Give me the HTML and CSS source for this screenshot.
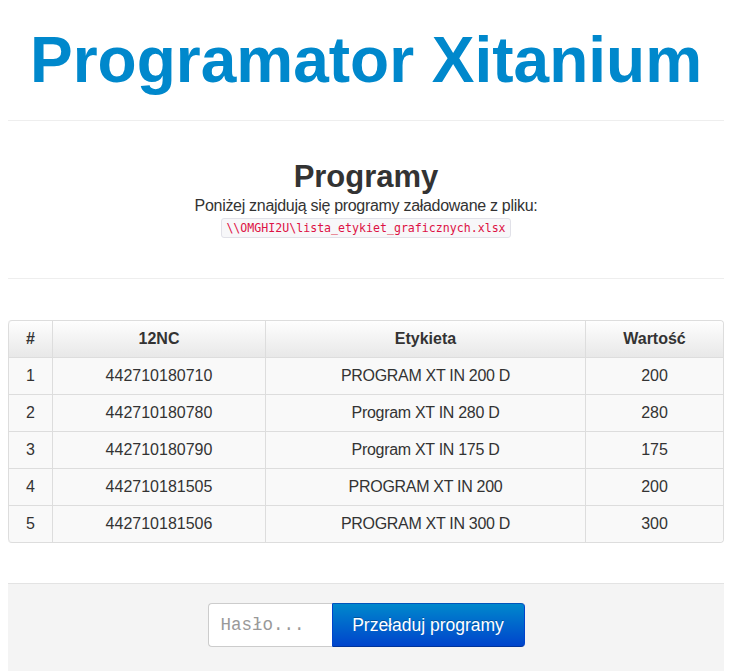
FILE: index.html
```html
<!DOCTYPE html>
<html lang="pl">
<head>
<meta charset="utf-8">
<title>Programator Xitanium</title>
<link rel="stylesheet" href="styles.css">
</head>
<body>
<div class="container">
  <h1 class="title">Programator Xitanium</h1>
  <hr class="divider">
  <div class="intro">
    <h2 class="heading">Programy</h2>
    <p class="lead">Poniżej znajdują się programy załadowane z pliku:</p>
    <code class="path">\\OMGHI2U\lista_etykiet_graficznych.xlsx</code>
  </div>
  <hr class="divider divider-lower">
  <table class="programs">
    <thead>
      <tr>
        <th class="col-num">#</th>
        <th class="col-nc">12NC</th>
        <th class="col-label">Etykieta</th>
        <th class="col-value">Wartość</th>
      </tr>
    </thead>
    <tbody>
      <tr><td>1</td><td>442710180710</td><td class="label">PROGRAM XT IN 200 D</td><td>200</td></tr>
      <tr><td>2</td><td>442710180780</td><td class="label">Program XT IN 280 D</td><td>280</td></tr>
      <tr><td>3</td><td>442710180790</td><td class="label">Program XT IN 175 D</td><td>175</td></tr>
      <tr><td>4</td><td>442710181505</td><td class="label">PROGRAM XT IN 200</td><td>200</td></tr>
      <tr><td>5</td><td>442710181506</td><td class="label">PROGRAM XT IN 300 D</td><td>300</td></tr>
    </tbody>
  </table>
  <div class="well">
    <form class="reload" onsubmit="return false;">
      <input class="password" type="password" placeholder="Hasło...">
      <button class="btn-reload" type="submit">Przeładuj programy</button>
    </form>
  </div>
</div>
</body>
</html>
```
FILE: styles.css
```css
html, body {
  margin: 0;
  padding: 0;
  background: #ffffff;
}
body {
  font-family: "Liberation Sans", Arial, sans-serif;
  font-size: 16px;
  line-height: 20px;
  color: #333333;
  overflow: hidden;
}
.container {
  padding: 0 8px;
}
.title {
  margin: 28px 0 0;
  font-size: 64px;
  line-height: 64px;
  font-weight: bold;
  color: #0088cc;
  text-align: center;
}
.divider {
  margin: 28px 0 0;
  border: 0;
  border-top: 1px solid #eeeeee;
  height: 0;
}
.intro {
  margin-top: 37px;
  text-align: center;
}
.heading {
  margin: 0;
  font-size: 31px;
  line-height: 38px;
  font-weight: bold;
  color: #333333;
}
.lead {
  margin: 0;
  font-size: 16px;
  line-height: 20px;
  letter-spacing: -0.3px;
}
.path {
  display: inline-block;
  margin-top: 2px;
  padding: 0 4px;
  height: 18px;
  line-height: 18px;
  font-family: "DejaVu Sans Mono", "Liberation Mono", monospace;
  font-size: 11.6px;
  color: #dd1144;
  background: #f7f7f9;
  border: 1px solid #e1e1e8;
  border-radius: 3px;
}
.divider-lower {
  margin-top: 40px;
}
.programs {
  margin-top: 41px;
  width: 100%;
  border-collapse: separate;
  border-spacing: 0;
  border: 1px solid #dddddd;
  border-left: 0;
  border-radius: 4px;
  table-layout: fixed;
}
.programs th,
.programs td {
  padding: 8px;
  line-height: 20px;
  text-align: center;
  border-left: 1px solid #dddddd;
  border-top: 1px solid #dddddd;
}
.programs th {
  border-top: 0;
  font-weight: bold;
  background: linear-gradient(#fefefe, #e8e8e8);
}
.programs th:first-child {
  border-top-left-radius: 4px;
}
.programs th:last-child {
  border-top-right-radius: 4px;
}
.programs tbody tr:last-child td:first-child {
  border-bottom-left-radius: 4px;
}
.programs tbody tr:last-child td:last-child {
  border-bottom-right-radius: 4px;
}
.programs td {
  background: #f9f9f9;
}
.programs td.label {
  letter-spacing: -0.3px;
}
.col-num { width: 27px; }
.col-nc { width: 196px; }
.col-label { width: 303px; }
.col-value { width: auto; }
.well {
  margin-top: 40px;
  padding: 19px 0 24px;
  background: #f4f4f4;
  border-top: 1px solid #e3e3e3;
}
.reload {
  margin: 0;
  display: flex;
  justify-content: center;
}
.password {
  box-sizing: border-box;
  width: 124px;
  height: 44px;
  margin: 0;
  padding: 0 12px;
  font-family: "Liberation Mono", "Courier New", monospace;
  font-size: 17.5px;
  color: #555555;
  background: #ffffff;
  border: 1px solid #cccccc;
  border-right: 0;
  border-radius: 4px 0 0 4px;
  outline: none;
}
.password::placeholder {
  color: #999999;
}
.btn-reload {
  box-sizing: border-box;
  width: 193px;
  height: 44px;
  margin: 0;
  padding: 0 19px;
  font-family: "Liberation Sans", Arial, sans-serif;
  font-size: 17.5px;
  color: #ffffff;
  text-shadow: 0 -1px 0 rgba(0,0,0,0.25);
  background: linear-gradient(#0088cc, #0044cc);
  border: 1px solid #0044aa;
  border-color: #0055bb #0044cc #003399;
  border-radius: 0 4px 4px 0;
  cursor: pointer;
}
```
